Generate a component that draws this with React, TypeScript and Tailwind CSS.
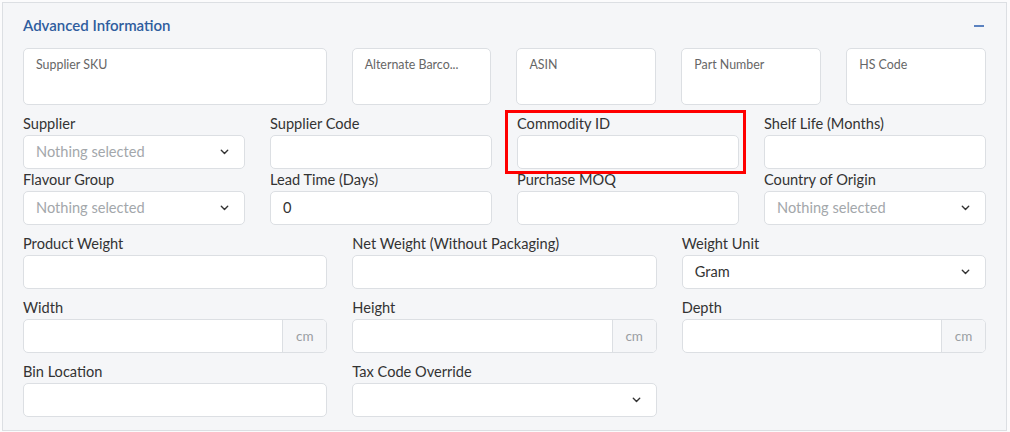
import React from "react";

const font = { fontFamily: "Lato, 'Noto Sans', sans-serif" };

function Chevron() {
  return (
    <svg width="9" height="6" viewBox="0 0 9 6" fill="none">
      <path d="M1.3 1.3 L4.5 4.4 L7.7 1.3" stroke="#333" strokeWidth="1.4" strokeLinecap="round" strokeLinejoin="round" />
    </svg>
  );
}

function Label({ children }: { children: React.ReactNode }) {
  return <div className="text-[14.6px] leading-[16px] mb-[3px] text-[#333] whitespace-nowrap">{children}</div>;
}

function Input({ value }: { value?: string }) {
  return (
    <div className="h-[34px] bg-white border border-[#dcdfe3] rounded-[5px] flex items-center px-[12px] text-[14.6px] text-[#333]">
      {value}
    </div>
  );
}

function Select({ value, placeholder }: { value?: string; placeholder?: boolean }) {
  return (
    <div className="h-[34px] bg-white border border-[#dcdfe3] rounded-[5px] flex items-center justify-between pl-[12px] pr-[15px] text-[14.6px]">
      <span className={placeholder ? "text-[#a3a7ab]" : "text-[#333]"}>{value}</span>
      <Chevron />
    </div>
  );
}

function UnitInput() {
  return (
    <div className="h-[34px] bg-white border border-[#dcdfe3] rounded-[5px] flex overflow-hidden">
      <div className="flex-1" />
      <div className="w-[44px] bg-[#f5f6f8] border-l border-[#dcdfe3] flex items-center justify-center text-[13.5px] text-[#9a9ea3]">cm</div>
    </div>
  );
}

function TextBox({ text, className }: { text: string; className?: string }) {
  return (
    <div className={"h-[57px] bg-white border border-[#dcdfe3] rounded-[5px] pl-[12px] pt-[7px] text-[12.4px] text-[#666] " + (className || "")}>
      {text}
    </div>
  );
}

export default function App() {
  return (
    <div className="w-[1010px] h-[432px] bg-[#fbfbfc] pt-[2px] pl-[2px]" style={font}>
      <div className="w-[1005px] h-[429px] bg-[#f5f6f8] border border-[#dcdfe3] px-[20px]">
        <div className="h-[45px] flex items-center justify-between">
          <span className="text-[15px] font-semibold text-[#2f5d9e]">Advanced Information</span>
          <span className="w-[10px] h-[2px] bg-[#5b82c0] mr-[2px]" />
        </div>
        <div className="flex gap-[25px]">
          <TextBox text="Supplier SKU" className="w-[304px]" />
          <TextBox text="Alternate Barco..." className="w-[140px]" />
          <TextBox text="ASIN" className="w-[140px]" />
          <TextBox text="Part Number" className="w-[140px]" />
          <TextBox text="HS Code" className="w-[140px]" />
        </div>
        <div className="grid grid-cols-4 gap-x-[25px] gap-y-[3px] mt-[11px]">
          <div>
            <Label>Supplier</Label>
            <Select value="Nothing selected" placeholder />
          </div>
          <div>
            <Label>Supplier Code</Label>
            <Input />
          </div>
          <div className="relative">
            <Label>Commodity ID</Label>
            <Input />
            <div className="absolute left-[-12px] top-[-6px] w-[241px] h-[64px] border-[3px] border-[#ff0000]" />
          </div>
          <div>
            <Label>Shelf Life (Months)</Label>
            <Input />
          </div>
          <div>
            <Label>Flavour Group</Label>
            <Select value="Nothing selected" placeholder />
          </div>
          <div>
            <Label>Lead Time (Days)</Label>
            <Input value="0" />
          </div>
          <div>
            <Label>Purchase MOQ</Label>
            <Input />
          </div>
          <div>
            <Label>Country of Origin</Label>
            <Select value="Nothing selected" placeholder />
          </div>
        </div>
        <div className="grid grid-cols-3 gap-x-[25px] gap-y-[11px] mt-[11px]">
          <div>
            <Label>Product Weight</Label>
            <Input />
          </div>
          <div>
            <Label>Net Weight (Without Packaging)</Label>
            <Input />
          </div>
          <div>
            <Label>Weight Unit</Label>
            <Select value="Gram" />
          </div>
          <div>
            <Label>Width</Label>
            <UnitInput />
          </div>
          <div>
            <Label>Height</Label>
            <UnitInput />
          </div>
          <div>
            <Label>Depth</Label>
            <UnitInput />
          </div>
          <div>
            <Label>Bin Location</Label>
            <Input />
          </div>
          <div>
            <Label>Tax Code Override</Label>
            <Select value="" />
          </div>
        </div>
      </div>
    </div>
  );
}
